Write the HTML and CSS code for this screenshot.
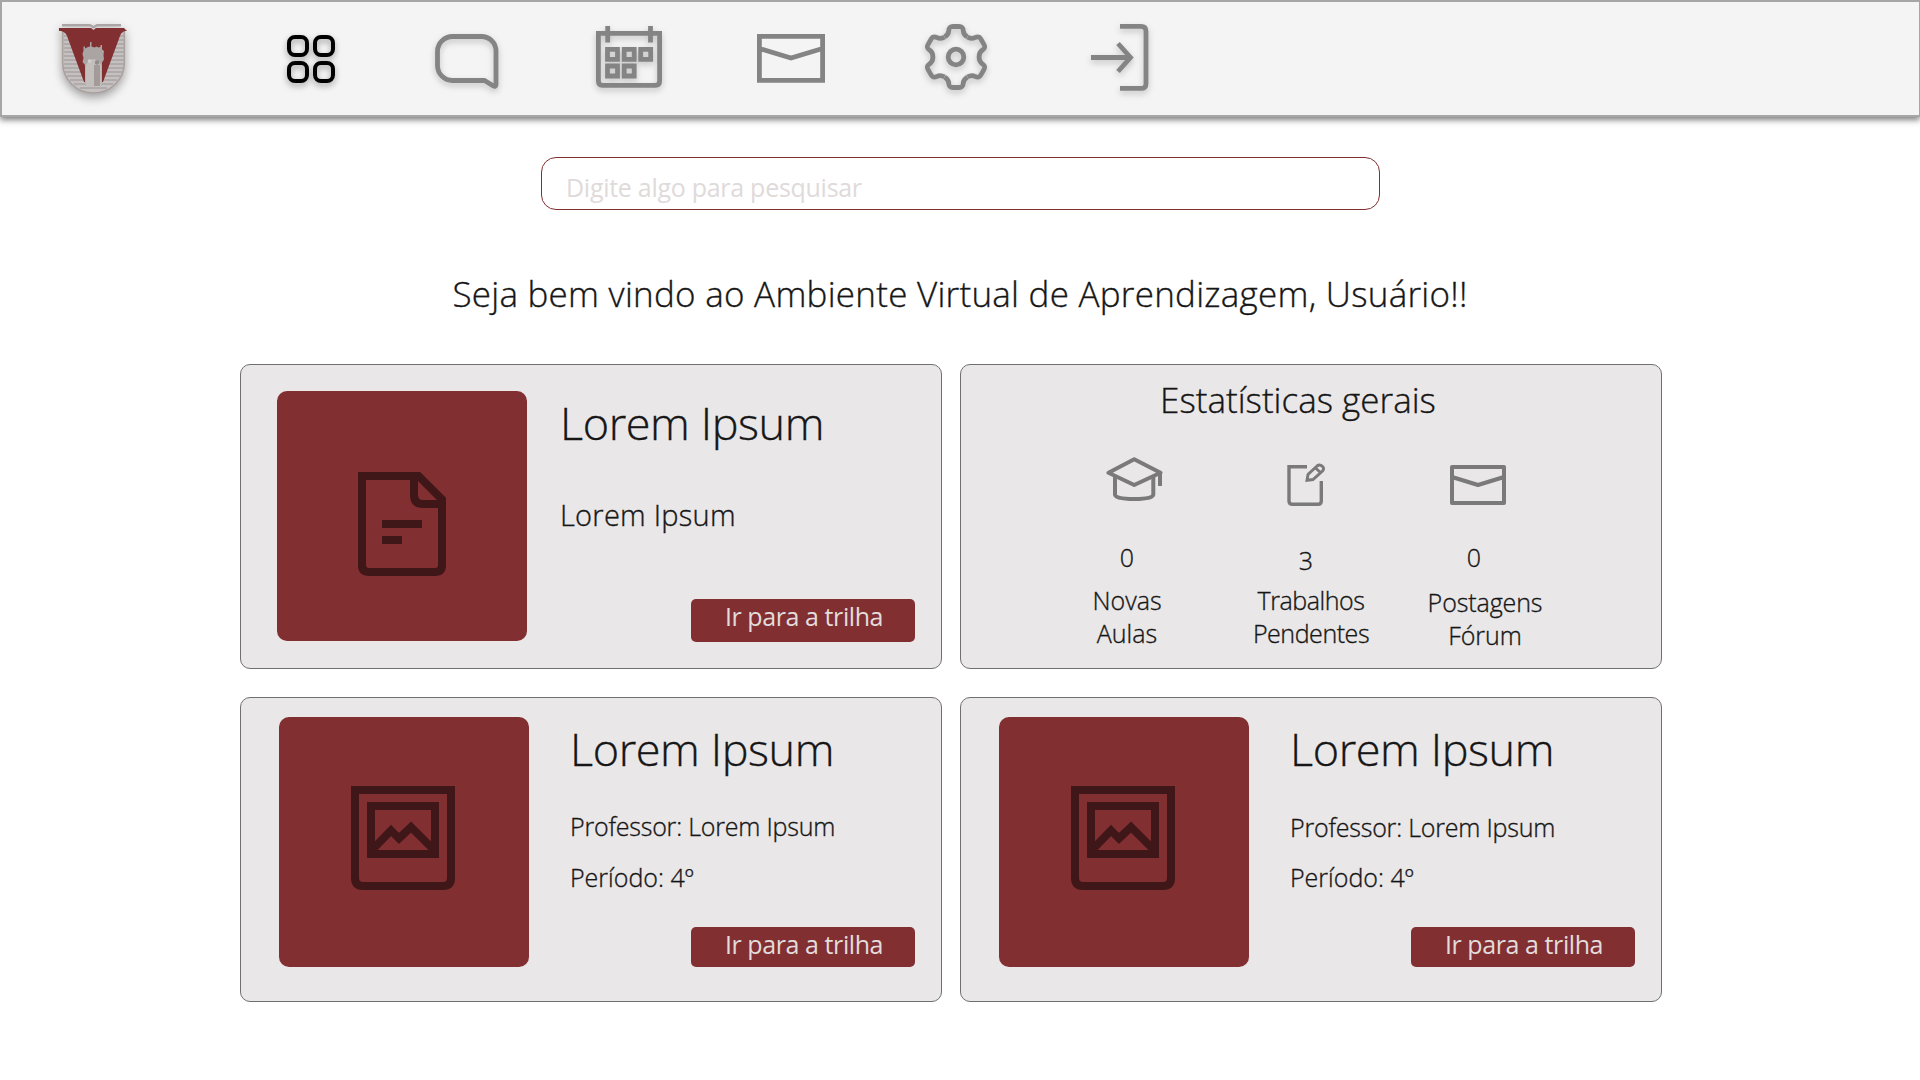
FILE: index.html
```html
<!DOCTYPE html>
<html lang="pt-BR">
<head>
<meta charset="utf-8">
<title>Ambiente Virtual de Aprendizagem</title>
<link rel="stylesheet" href="styles.css">
</head>
<body>
<header class="topbar">
  <svg class="logo" width="70" height="74" viewBox="58 22 70 74">
    <path d="M62 30 V63 a31.500 30.500 0 0 0 63 0 V30z" fill="#c4c1c0"/>
    <path d="M64 36H124M64 40H124M64 44H124M64 48H124M64 52H124M64 56H124M64 60H124M64 64H124M64 68H124M65 72H122M67 76H120M70 80H117M74 84H113M80 88H107" stroke="#a9a4a3" stroke-width="1.300"/>
    <path d="M62.700 31V63a30.800 30 0 0 0 61.600 0V31" fill="none" stroke="#aaa09e" stroke-width="1.500"/>
    <path d="M59 28H91l2.500 2 2.500-2h28l3 3c-4 0-6 2-7 5L103 82H84L67 36c-1-3-4-5-8-5z" fill="#822f32"/>
    <path d="M62 25.200H90l3.500 2 3.500-2h24" fill="none" stroke="#aba6a5" stroke-width="2.400"/>
    <path d="M83.500 50.500v-4h1.500v2l3-1.500 2-.5v-4.500h1.500v4.500l3 1 2-1 2 1 2-.5v-2h1.500v4.500l2 1.500-.5 4 .5 4.500-2 3V86H85V65l-2.500-3 1-4-1-4z" fill="#aaa5a3"/>
    <path d="M85.500 65.500q7.500-13 16 0V86h-5.500V67h-2v19h-8.500z" fill="#c3bfbd"/>
    <rect x="94" y="65" width="6" height="21" fill="#a39b99"/>
    <circle cx="89.500" cy="61" r="1.800" fill="#d3d0cf"/><circle cx="97" cy="62.500" r="2.200" fill="#938c8b"/>
  </svg>
  <nav class="menu">
    <svg class="ico grid-ico" width="48" height="48" viewBox="0 0 48 48"><g fill="none" stroke="#000" stroke-width="4"><rect x="2" y="2" width="18" height="18" rx="6"/><rect x="28" y="2" width="18" height="18" rx="6"/><rect x="2" y="28" width="18" height="18" rx="6"/><rect x="28" y="28" width="18" height="18" rx="6"/></g></svg>
    <svg class="ico chat-ico" width="64" height="55" viewBox="0 0 64 55"><path d="M17.500 2.500H46.500A14.500 14.500 0 0 1 61 17V50.500Q61 53.500 58 51.700L49.500 46.500H17.500A15 15 0 0 1 2.500 32V17A15 15 0 0 1 17.500 2.500z"/></svg>
    <svg class="ico cal-ico" width="66" height="62" viewBox="0 0 66 62"><path d="M2.400 7.400H63.600V55Q63.600 59.300 59.500 59.300H6.500Q2.400 59.300 2.400 55zM11.700 0V16.500M54.500 0V16.500M11.500 23.300h10v10h-10zM28.200 23.300h10v10h-10zM44.700 23.300h10v10h-10zM11.500 40h10v10h-10zM28.200 40h10v10h-10z"/></svg>
    <svg class="ico mail-ico" width="68" height="49" viewBox="0 0 68 49"><path d="M2.400 2.400H65.600V46.400H2.400zM2.400 14.500L34 24 65.600 14.500"/></svg>
    <svg class="ico gear-ico" width="68" height="68" viewBox="-34 -34 68 68"><defs><path id="tooth" d="M-11.500-20C-9-21.500-7.500-23-7.300-26C-7-29.500-6-30.500-3-30.500H3C6-30.500 7-29.500 7.300-26C7.500-23 9-21.500 11.500-20"/></defs><use href="#tooth"/><use href="#tooth" transform="rotate(60)"/><use href="#tooth" transform="rotate(120)"/><use href="#tooth" transform="rotate(180)"/><use href="#tooth" transform="rotate(240)"/><use href="#tooth" transform="rotate(300)"/><circle r="7.800"/></svg>
    <svg class="ico exit-ico" width="58" height="67" viewBox="0 0 58 67"><path d="M29 2.400H50Q55 2.400 55 7.400V59.400Q55 64.400 50 64.400H29M0 33.500H38M27 19.500L39.500 33.500 27 47.500"/></svg>
  </nav>
</header>
<main class="page">
  <div class="search">Digite algo para pesquisar</div>
  <h1 class="welcome">Seja bem vindo ao Ambiente Virtual de Aprendizagem, Usuário!!</h1>
  <section class="cards">
    <article class="card card-main">
      <div class="thumb"><svg class="doc" width="88" height="104" viewBox="0 0 88 104"><path d="M4 4H60.500L84 27.500V93Q84 100 77 100H11Q4 100 4 93zM56 4V23Q56 32 65 32H84M24 52H64M24 68H44"/></svg></div>
      <div class="body"><h2>Lorem Ipsum</h2><p class="sub">Lorem Ipsum</p><a class="btn">Ir para a trilha</a></div>
    </article>
    <article class="card card-stats">
      <h3>Estatísticas gerais</h3>
      <div class="stats">
        <div class="stat stat-a">
          <svg width="57" height="44" viewBox="0 0 57 44"><path stroke-linejoin="round" d="M2.500 15.700L28.200 2.200 54.500 15.700 28.200 28z"/><path d="M9 19V37.500Q9 42 28.200 42 47.300 42 47.300 37.500V19M54 15.500V29"/></svg>
          <b>0</b><p>Novas<br>Aulas</p>
        </div>
        <div class="stat stat-b">
          <svg width="39" height="43" viewBox="0 0 39 43"><path d="M20 3.700H2V38Q2 41.300 5.500 41.300H31Q34.300 41.300 34.300 38V18" stroke-width="3.400"/><path d="M20 17.300L21 11.500 30 3C33.500 .3 38.500 4.500 35.500 8L26 16.500zM28.500 5L33.500 9.500" stroke-width="2.900"/></svg>
          <b>3</b><p>Trabalhos<br>Pendentes</p>
        </div>
        <div class="stat stat-c">
          <svg width="56" height="40" viewBox="0 0 56 40"><path stroke-linejoin="round" d="M2 2H54V38H2zM2 12L28 20 54 12"/></svg>
          <b>0</b><p>Postagens<br>Fórum</p>
        </div>
      </div>
    </article>
    <article class="card card-course">
      <div class="thumb"><svg class="pic" width="104" height="104" viewBox="0 0 104 104"><path d="M4 4H100V92Q100 100 92 100H12Q4 100 4 92zM20 20H84V68H20zM22 63L40 44.500 48 52.500 60 41 83 64"/></svg></div>
      <div class="body"><h2>Lorem Ipsum</h2><p class="teacher">Professor: Lorem Ipsum</p><p class="term">Período: 4º</p><a class="btn">Ir para a trilha</a></div>
    </article>
    <article class="card card-course card-last">
      <div class="thumb"><svg class="pic" width="104" height="104" viewBox="0 0 104 104"><path d="M4 4H100V92Q100 100 92 100H12Q4 100 4 92zM20 20H84V68H20zM22 63L40 44.500 48 52.500 60 41 83 64"/></svg></div>
      <div class="body"><h2>Lorem Ipsum</h2><p class="teacher">Professor: Lorem Ipsum</p><p class="term">Período: 4º</p><a class="btn">Ir para a trilha</a></div>
    </article>
  </section>
</main>
</body>
</html>
```
FILE: styles.css
```css
* { box-sizing: border-box; margin: 0; padding: 0; }
body { width: 1920px; height: 1080px; overflow: hidden; background: #fff; color: #161616; font-family: "Open Sans", "Noto Sans", sans-serif; font-weight: 300; }
h1, h2, h3, b { font-weight: 300; }
h1, h2, h3, p, b { -webkit-text-stroke: .35px #161616; }
.topbar { display: flex; align-items: flex-start; height: 117px; background: #f4f4f4; border: 2px solid #a6a6a6; border-right-width: 1px; box-shadow: 0 3px 6px rgba(0, 0, 0, .5); }
.logo { margin: 20px 0 0 56px; filter: drop-shadow(0 4px 5px rgba(0, 0, 0, .35)); }
.menu { display: flex; align-items: flex-start; }
.ico { fill: none; stroke: #848484; stroke-width: 4.800; overflow: visible; filter: drop-shadow(0 3px 3px rgba(0, 0, 0, .2)); }
.grid-ico { margin: 33px 0 0 159px; filter: drop-shadow(0 3px 3px rgba(0, 0, 0, .35)); }
.chat-ico { margin: 32px 0 0 100px; }
.cal-ico { margin: 24px 0 0 97px; }
.mail-ico { margin: 32px 0 0 95px; filter: none; }
.gear-ico { margin: 20.500px 0 0 97px; }
.exit-ico { margin: 21.500px 0 0 101px; }

.page { display: flex; flex-direction: column; }
.search { width: 839px; height: 53px; margin: 40px 0 0 541px; padding: 11px 0 0 24px; border: 1px solid #822f32; border-radius: 15px; line-height: 36px; font-size: 25px; font-weight: 400; letter-spacing: -.28px; color: #e0dada; }
.welcome { margin-top: 60px; text-align: center; font-size: 35px; line-height: 48px; letter-spacing: .25px; }
.cards { display: grid; grid-template-columns: 702px 702px; grid-template-rows: 305px 305px; gap: 28px 18px; margin: 46px 0 0 240px; }
.card { display: flex; border: 1px solid #707070; border-radius: 10px; background: #e9e7e8; }
.thumb { width: 250px; height: 250px; flex: none; border-radius: 10px; background: #822f32; }
.thumb svg { fill: none; stroke: #401718; stroke-width: 8; }
.doc { margin: 81px 0 0 81px; }
.pic { margin: 69px 0 0 72px; }
.body { display: flex; flex: 1; flex-direction: column; }
.card-main { padding: 26px 26px 26px 36px; }
.card-main .body { padding-left: 33px; }
.card-course { padding: 19px 26px 34px 38px; }
.card-course .body { padding-left: 41px; }
h2 { margin-top: 2px; font-size: 45px; line-height: 60px; letter-spacing: -.4px; }
.sub { margin-top: 42px; font-size: 29px; line-height: 40px; letter-spacing: .25px; }
.teacher, .term { font-size: 25px; line-height: 34px; }
.teacher { margin-top: 30px; letter-spacing: -.2px; }
.term { margin-top: 17px; }
.card-last .teacher { margin-top: 31px; }
.card-last .term { margin-top: 16px; }
.btn { width: 224px; height: 43px; margin-top: auto; padding-left: 2px; align-self: flex-end; text-align: center; border-radius: 5px; background: #822f32; color: #e3dcdc; font-size: 25px; line-height: 35px; font-weight: 400; letter-spacing: -.42px; }
.card-course .btn { height: 40px; line-height: 34px; }
.card-stats { flex-direction: column; padding-top: 11px; }
h3 { padding-right: 26px; text-align: center; font-size: 35px; line-height: 48px; }
.stats { display: flex; padding-left: 81px; }
.stat { display: flex; flex-direction: column; align-items: center; width: 170px; font-size: 25px; line-height: 33px; text-align: center; }
.stat svg { fill: none; stroke: #7a7a7a; stroke-width: 4; }
.stat-a svg { margin: 33px 0 40px 14px; }
.stat-a b { margin-bottom: 10px; }
.stat-b { margin-left: 14px; }
.stat-b p { letter-spacing: -.45px; }
.stat-b svg { margin: 39px 9px 38px 0; }
.stat-b b { margin: 0 10px 7px 0; }
.stat-c { margin-left: 4px; }
.stat-c p { letter-spacing: -.1px; }
.stat-c svg { margin: 41px 14px 36px 0; }
.stat-c b { margin: 0 22px 12px 0; }
```
